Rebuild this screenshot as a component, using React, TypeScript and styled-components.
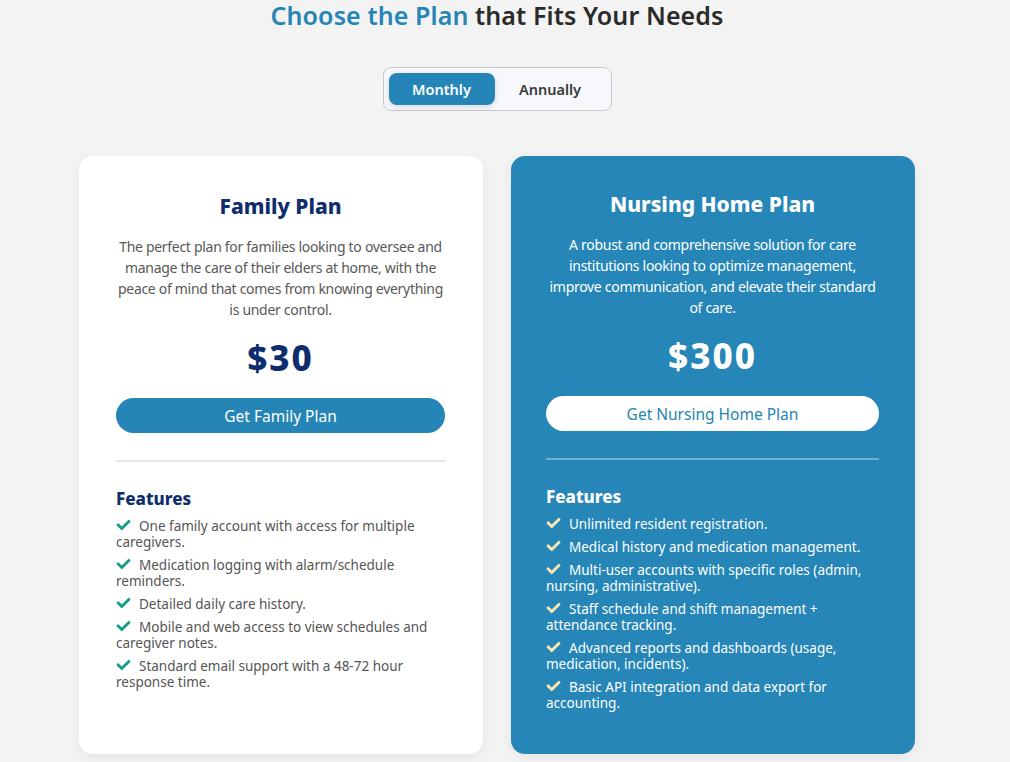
import React, { useState } from "react";
import styled, { createGlobalStyle } from "styled-components";
import { FaCheck } from "react-icons/fa";

const Global = createGlobalStyle`
  html, body { margin: 0; padding: 0; background: #f3f3f3; }
  body { font-family: "Noto Sans", "Open Sans", sans-serif; overflow: hidden; }
  * { box-sizing: border-box; }
`;

const Page = styled.div`
  width: 994px;
  height: 762px;
  display: flex;
  flex-direction: column;
  align-items: center;
  background: #f3f3f3;
`;

const Title = styled.h1`
  margin: 0;
  font-size: 25px;
  line-height: 30px;
  font-weight: 600;
  color: #2a2a2a;
  letter-spacing: 0.1px;
`;

const Accent = styled.span`
  color: #2585b6;
`;

const Toggle = styled.div`
  margin-top: 37px;
  display: flex;
  width: 229px;
  height: 44px;
  padding: 5px;
  border: 1px solid #c9c9cc;
  border-radius: 8px;
  background: #f7f8fc;
`;

const ToggleBtn = styled.button<{ $active?: boolean }>`
  flex: ${(p) => (p.$active ? "0 0 106px" : "1")};
  border: none;
  border-radius: 8px;
  font-family: inherit;
  font-size: 14.5px;
  font-weight: 600;
  cursor: pointer;
  background: ${(p) => (p.$active ? "#2585b6" : "transparent")};
  color: ${(p) => (p.$active ? "#fff" : "#3a3a3a")};
  box-shadow: ${(p) => (p.$active ? "0 2px 6px rgba(0,0,0,0.12)" : "none")};
`;

const Cards = styled.div`
  margin-top: 45px;
  display: flex;
  gap: 28px;
  align-items: stretch;
`;

const Card = styled.div<{ $featured?: boolean }>`
  width: 404px;
  height: 598px;
  border-radius: 14px;
  padding: ${(p) => (p.$featured ? "35px 36px 0 35px" : "37px 38px 0 37px")};
  background: ${(p) => (p.$featured ? "#2586b7" : "#ffffff")};
  color: ${(p) => (p.$featured ? "#ffffff" : "#555")};
  box-shadow: 0 4px 14px rgba(0, 0, 0, 0.06);
  display: flex;
  flex-direction: column;
`;

const PlanName = styled.h2<{ $featured?: boolean }>`
  margin: 0;
  text-align: center;
  font-size: 21px;
  line-height: 26px;
  font-weight: 800;
  color: ${(p) => (p.$featured ? "#fff" : "#0f2d6c")};
`;

const Desc = styled.p<{ $featured?: boolean }>`
  margin: 17px 0 0;
  text-align: center;
  font-size: 14px;
  line-height: 21px;
  letter-spacing: -0.3px;
  color: ${(p) => (p.$featured ? "#fff" : "#585858")};
`;

const Price = styled.div<{ $featured?: boolean }>`
  margin-top: 18px;
  text-align: center;
  font-size: 35px;
  line-height: 40px;
  font-weight: 800;
  letter-spacing: 2px;
  color: ${(p) => (p.$featured ? "#fff" : "#0f2d6c")};
`;

const CTA = styled.button<{ $featured?: boolean }>`
  margin-top: 20px;
  height: 35px;
  width: 100%;
  border: none;
  border-radius: 18px;
  font-family: inherit;
  font-size: 15.5px;
  font-weight: 400;
  cursor: pointer;
  background: ${(p) => (p.$featured ? "#fff" : "#2585b6")};
  color: ${(p) => (p.$featured ? "#2585b6" : "#fff")};
`;

const Divider = styled.hr<{ $featured?: boolean }>`
  margin: 27px 0 0;
  border: none;
  height: 2px;
  background: ${(p) => (p.$featured ? "rgba(255,255,255,0.35)" : "#e6e6e6")};
`;

const FeaturesTitle = styled.h3<{ $featured?: boolean }>`
  margin: 26px 0 0;
  font-size: 17px;
  line-height: 22px;
  font-weight: 800;
  color: ${(p) => (p.$featured ? "#fff" : "#0f2d6c")};
`;

const List = styled.ul`
  list-style: none;
  margin: 8px 0 0;
  padding: 0;
  display: flex;
  flex-direction: column;
  gap: 7px;
`;

const Item = styled.li<{ $featured?: boolean }>`
  font-size: 13.5px;
  line-height: 16px;
  color: ${(p) => (p.$featured ? "#fff" : "#555")};
`;

const Check = styled(FaCheck)<{ $featured?: boolean }>`
  width: 15px;
  height: 14px;
  margin-right: 8px;
  vertical-align: -1px;
  color: ${(p) => (p.$featured ? "#fde7b0" : "#169c8a")};
`;

const plans = [
  {
    name: "Family Plan",
    featured: false,
    desc: "The perfect plan for families looking to oversee and manage the care of their elders at home, with the peace of mind that comes from knowing everything is under control.",
    price: "$30",
    cta: "Get Family Plan",
    features: [
      "One family account with access for multiple caregivers.",
      "Medication logging with alarm/schedule reminders.",
      "Detailed daily care history.",
      "Mobile and web access to view schedules and caregiver notes.",
      "Standard email support with a 48-72 hour response time.",
    ],
  },
  {
    name: "Nursing Home Plan",
    featured: true,
    desc: "A robust and comprehensive solution for care institutions looking to optimize management, improve communication, and elevate their standard of care.",
    price: "$300",
    cta: "Get Nursing Home Plan",
    features: [
      "Unlimited resident registration.",
      "Medical history and medication management.",
      "Multi-user accounts with specific roles (admin, nursing, administrative).",
      "Staff schedule and shift management + attendance tracking.",
      "Advanced reports and dashboards (usage, medication, incidents).",
      "Basic API integration and data export for accounting.",
    ],
  },
];

export default function App() {
  const [period, setPeriod] = useState<"m" | "a">("m");
  return (
    <Page>
      <Global />
      <Title>
        <Accent>Choose the Plan</Accent> that Fits Your Needs
      </Title>
      <Toggle>
        <ToggleBtn $active={period === "m"} onClick={() => setPeriod("m")}>
          Monthly
        </ToggleBtn>
        <ToggleBtn $active={period === "a"} onClick={() => setPeriod("a")}>
          Annually
        </ToggleBtn>
      </Toggle>
      <Cards>
        {plans.map((p) => (
          <Card key={p.name} $featured={p.featured}>
            <PlanName $featured={p.featured}>{p.name}</PlanName>
            <Desc $featured={p.featured}>{p.desc}</Desc>
            <Price $featured={p.featured}>{p.price}</Price>
            <CTA $featured={p.featured}>{p.cta}</CTA>
            <Divider $featured={p.featured} />
            <FeaturesTitle $featured={p.featured}>Features</FeaturesTitle>
            <List>
              {p.features.map((f) => (
                <Item key={f} $featured={p.featured}>
                  <Check $featured={p.featured} />
                  {f}
                </Item>
              ))}
            </List>
          </Card>
        ))}
      </Cards>
    </Page>
  );
}
